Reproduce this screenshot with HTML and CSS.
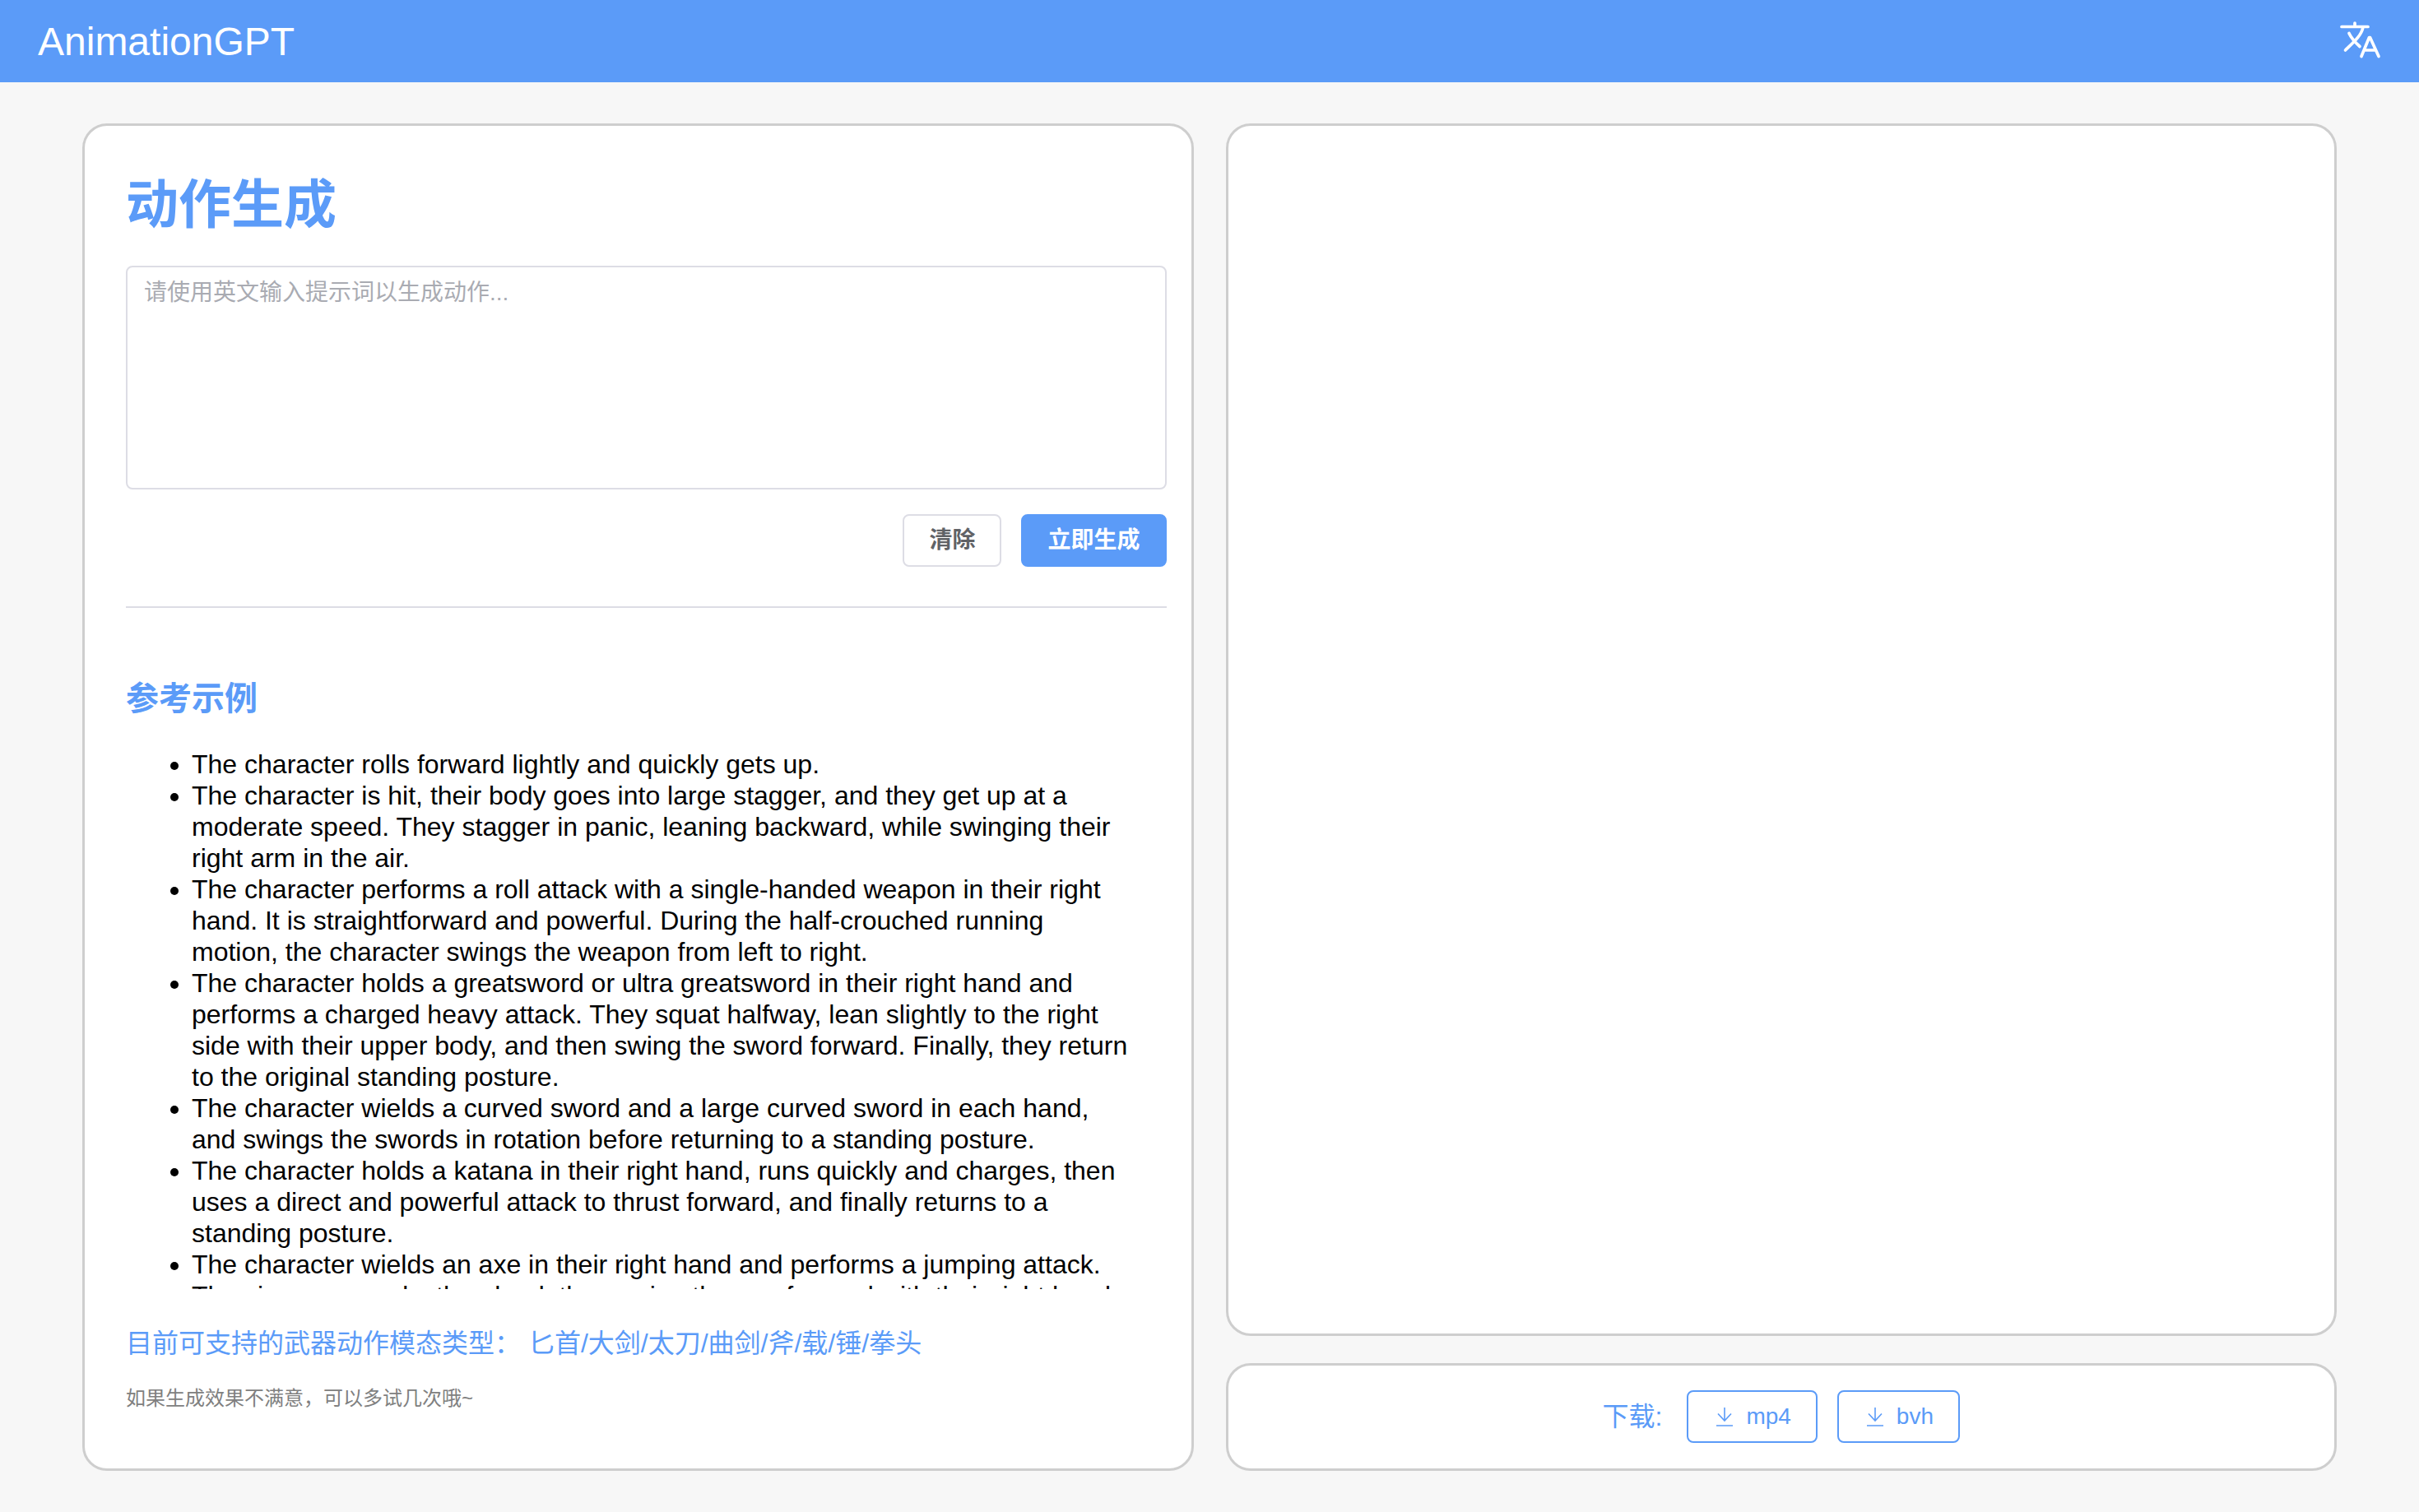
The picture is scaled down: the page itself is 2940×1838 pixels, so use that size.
FILE: index.html
```html
<!DOCTYPE html>
<html lang="zh-CN">
<head>
<meta charset="utf-8">
<title>AnimationGPT</title>
<link rel="stylesheet" href="styles.css">
</head>
<body>
<header class="topbar">
  <a class="brand" href="#">AnimationGPT</a>
  <button class="lang" type="button" aria-label="切换语言">
    <svg viewBox="0 0 50 50" fill="none" stroke="#fff" stroke-width="3.7" stroke-linecap="round" stroke-linejoin="round" aria-hidden="true">
      <path d="M2 7.5H34M18 3V7.5M28 8C26 18 18 25 6.5 36M11 15.5C14 22 19 27 24 31.5M26 43.5L35.5 20.5H36.5L47 43.5M30 36H43"/>
    </svg>
  </button>
</header>
<main class="layout">
  <section class="card prompt">
    <h1 class="title"><label for="prompt">动作生成</label></h1>
    <textarea class="input" id="prompt" placeholder="请使用英文输入提示词以生成动作..."></textarea>
    <div class="actions">
      <button class="btn" type="button">清除</button>
      <button class="btn btn-primary" type="button">立即生成</button>
    </div>
    <hr class="divider">
    <h2 class="subtitle">参考示例</h2>
    <div class="examples">
      <ul class="list">
        <li>The character rolls forward lightly and quickly gets up.</li>
        <li>The character is hit, their body goes into large stagger, and they get up at a moderate speed. They stagger in panic, leaning backward, while swinging their right arm in the air.</li>
        <li>The character performs a roll attack with a single-handed weapon in their right hand. It is straightforward and powerful. During the half-crouched running motion, the character swings the weapon from left to right.</li>
        <li>The character holds a greatsword or ultra greatsword in their right hand and performs a charged heavy attack. They squat halfway, lean slightly to the right side with their upper body, and then swing the sword forward. Finally, they return to the original standing posture.</li>
        <li>The character wields a curved sword and a large curved sword in each hand, and swings the swords in rotation before returning to a standing posture.</li>
        <li>The character holds a katana in their right hand, runs quickly and charges, then uses a direct and powerful attack to thrust forward, and finally returns to a standing posture.</li>
        <li>The character wields an axe in their right hand and performs a jumping attack. They jump upwards, then land, then swing the axe forward with their right hand.</li>
      </ul>
    </div>
    <p class="weapons">目前可支持的武器动作模态类型： 匕首/大剑/太刀/曲剑/斧/载/锤/拳头</p>
    <p class="hint">如果生成效果不满意，可以多试几次哦~</p>
  </section>
  <div class="side">
    <section class="card viewer" aria-label="预览"></section>
    <section class="card download">
      <span class="download-label">下载:</span>
      <button class="btn btn-outline" type="button">
        <svg class="icon" viewBox="0 0 28 28" fill="none" stroke="currentColor" stroke-width="1.6" aria-hidden="true"><path d="M14 3V19M6 10.500L14 19L22 10.500M4 25H24"/></svg>mp4
      </button>
      <button class="btn btn-outline" type="button">
        <svg class="icon" viewBox="0 0 28 28" fill="none" stroke="currentColor" stroke-width="1.6" aria-hidden="true"><path d="M14 3V19M6 10.500L14 19L22 10.500M4 25H24"/></svg>bvh
      </button>
    </section>
  </div>
</main>
</body>
</html>
```
FILE: styles.css
```css
* { box-sizing: border-box; }

body {
  margin: 0;
  height: 100vh;
  display: flex;
  flex-direction: column;
  background: #f7f7f7;
  color: #000;
  font-family: "Liberation Sans", "Noto Sans CJK SC", sans-serif;
  font-size: 32px;
}

.topbar {
  flex: none;
  height: 100px;
  padding: 0 46px;
  display: flex;
  align-items: center;
  justify-content: space-between;
  background: #5b9bf8;
}
.brand { color: #fff; font-size: 48px; text-decoration: none; }
.lang { width: 50px; height: 50px; padding: 0; border: 0; background: none; }
.lang svg { display: block; width: 50px; height: 50px; }

.layout {
  flex: 1;
  min-height: 0;
  padding: 50px 100px;
  display: grid;
  grid-template-columns: 1fr 1fr;
  gap: 39px;
}

.card {
  background: #fff;
  border: 3px solid #cecece;
  border-radius: 30px;
}

.prompt {
  min-height: 0;
  padding: 50px 30px 61px 50px;
  display: flex;
  flex-direction: column;
}
.title {
  margin: 0 0 28px;
  color: #5b9bf8;
  font-size: 64px;
  line-height: 92px;
}
.input {
  flex: none;
  height: 272px;
  padding: 10px 20px;
  border: 2px solid #dddde5;
  border-radius: 8px;
  background: #fff;
  font: 28px/42px "Liberation Sans", "Noto Sans CJK SC", sans-serif;
  resize: none;
}
.input::placeholder { color: #a9abb2; opacity: 1; }

.actions {
  margin-top: 30px;
  display: flex;
  justify-content: flex-end;
  gap: 24px;
}
.btn {
  height: 64px;
  padding: 0 30px;
  display: flex;
  align-items: center;
  gap: 12px;
  border: 2px solid #dddde5;
  border-radius: 8px;
  background: #fff;
  color: #606266;
  font: bold 28px/28px "Liberation Sans", "Noto Sans CJK SC", sans-serif;
}
.btn-primary { border-color: #5b9bf8; background: #5b9bf8; color: #fff; }
.btn-outline { border-color: #5b9bf8; color: #5b9bf8; font-weight: normal; }
.icon { width: 28px; height: 28px; }

.divider {
  width: 100%;
  margin: 48px 0 0;
  border: 0;
  border-top: 2px solid #dddde5;
}
.subtitle {
  margin: 80px 0 31px;
  color: #5b9bf8;
  font-size: 40px;
  line-height: 60px;
}
.examples {
  flex: 1;
  min-height: 0;
  overflow-y: auto;
  scrollbar-width: none;
}
.list {
  margin: 0;
  padding: 0 42px 0 80px;
  line-height: 38px;
}
.weapons {
  margin: 42px 0 19px;
  color: #5b9bf8;
  line-height: 48px;
}
.hint {
  margin: 0;
  color: #808080;
  font-size: 24px;
  line-height: 48px;
}

.side {
  min-height: 0;
  display: flex;
  flex-direction: column;
  gap: 33px;
}
.viewer { flex: 1; }
.download {
  padding: 30px 30px 31px;
  display: flex;
  align-items: center;
  justify-content: center;
  gap: 24px;
}
.download-label { margin-right: 6px; color: #5b9bf8; line-height: 40px; }
```
